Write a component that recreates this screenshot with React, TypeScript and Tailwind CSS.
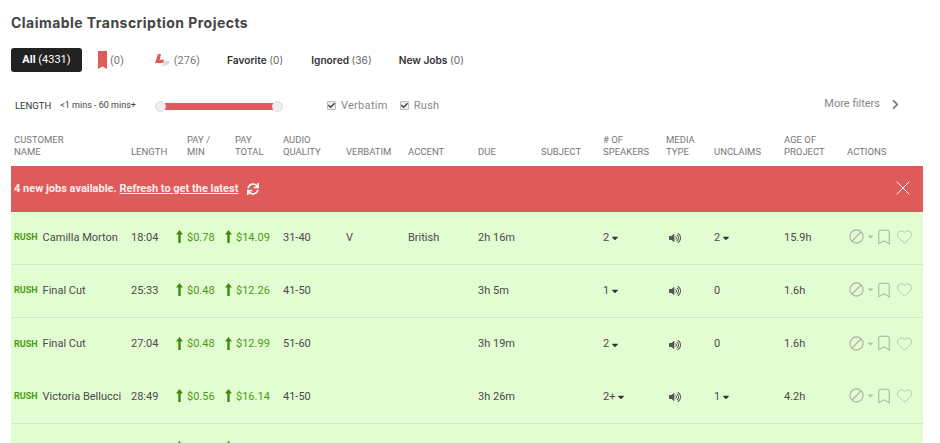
import React from "react";
import { FaCaretDown, FaCheck, FaChevronRight, FaSync, FaVolumeUp } from "react-icons/fa";
import { Bookmark, Heart, X } from "lucide-react";

const gridCols =
  "grid grid-cols-[117px_45px_49px_58px_63px_62px_70px_63px_62px_63px_48px_70px_63px_1fr] px-[3px]";

type Job = {
  name: string;
  length: string;
  perMin: string;
  total: string;
  quality: string;
  verbatim?: string;
  accent?: string;
  due: string;
  speakers: string;
  unclaims: string;
  showCaret?: boolean;
  age: string;
  border: boolean;
};

const jobs: Job[] = [
  { name: "Camilla Morton", length: "18:04", perMin: "$0.78", total: "$14.09", quality: "31-40", verbatim: "V", accent: "British", due: "2h 16m", speakers: "2", unclaims: "2", showCaret: true, age: "15.9h", border: true },
  { name: "Final Cut", length: "25:33", perMin: "$0.48", total: "$12.26", quality: "41-50", due: "3h 5m", speakers: "1", unclaims: "0", age: "1.6h", border: true },
  { name: "Final Cut", length: "27:04", perMin: "$0.48", total: "$12.99", quality: "51-60", due: "3h 19m", speakers: "2", unclaims: "0", age: "1.6h", border: false },
  { name: "Victoria Bellucci", length: "28:49", perMin: "$0.56", total: "$16.14", quality: "41-50", due: "3h 26m", speakers: "2+", unclaims: "1", showCaret: true, age: "4.2h", border: true },
];

const BanIcon = () => (
  <svg width="15" height="15" viewBox="0 0 15 15" fill="none" stroke="#a8b3a0" strokeWidth="1.1">
    <circle cx="7.5" cy="7.5" r="6.6" />
    <path d="M3 12 12 3" />
  </svg>
);

const ArrowUp = () => (
  <svg width="7" height="13" viewBox="0 0 7 13" className="mb-[3px] shrink-0" fill="#3f8a0c">
    <path d="M3.500 0 7 4.500H4.700V13H2.300V4.500H0z" />
  </svg>
);

const LogoMark = () => (
  <svg width="16" height="13" viewBox="0 0 16 13">
    <path d="M6 8c4-1 7-2 9 0-2 3-6 5-9 4l3-2z" fill="#d5dcdc" />
    <path d="M3 0h3L4.600 6 9 5.400 8 9H0z" fill="#df5a5a" />
  </svg>
);

const Check = ({ label }: { label: string }) => (
  <label className="flex items-center gap-[5px]">
    <span className="mb-[2px] flex h-[9px] w-[9px] items-center justify-center rounded-[1px] border border-[#bbb] bg-[#eee]">
      <FaCheck className="text-[7px] text-[#444]" />
    </span>
    <span className="text-[11px] tracking-[0.3px] text-[#888]">{label}</span>
  </label>
);

const Tab = ({ label, count, className }: { label: string; count: string; className?: string }) => (
  <span className={`mt-[2px] text-[10.2px] font-semibold text-[#333] ${className ?? ""}`} style={{ fontFamily: "Inter, sans-serif" }}>
    {label} <span className="font-normal text-[#666]">{count}</span>
  </span>
);

const Row = ({ job }: { job: Job }) => (
  <div className={`${gridCols} h-[53px] items-center bg-[#e3fdd2] text-[11px] text-[#4a4a4a] ${job.border ? "border-b border-[#d3e8c8]" : ""}`}>
    <div className="flex items-center gap-[5px] whitespace-nowrap">
      <span className="text-[9px] font-bold text-[#4c9a12]">RUSH</span>
      <span>{job.name}</span>
    </div>
    <div>{job.length}</div>
    <div className="flex items-center gap-[4px] text-[#4c9a12]">
      <ArrowUp />
      <span>{job.perMin}</span>
    </div>
    <div className="flex items-center gap-[4px] text-[#4c9a12]">
      <ArrowUp />
      <span>{job.total}</span>
    </div>
    <div>{job.quality}</div>
    <div>{job.verbatim}</div>
    <div>{job.accent}</div>
    <div>{job.due}</div>
    <div />
    <div className="flex items-center gap-[1px]">
      {job.speakers}
      <FaCaretDown className="text-[10px] text-[#333]" />
    </div>
    <div className="pl-[3px]">
      <FaVolumeUp className="text-[12px] text-[#555]" />
    </div>
    <div className="flex items-center gap-[1px]">
      {job.unclaims}
      {job.showCaret && <FaCaretDown className="text-[10px] text-[#333]" />}
    </div>
    <div>{job.age}</div>
    <div className="mb-[3px] flex items-center pl-[2px]">
      <BanIcon />
      <FaCaretDown className="ml-[2px] text-[9px] text-[#b0b9aa]" />
      <Bookmark size={18} strokeWidth={1} className="text-[#8f9a88]" />
      <Heart size={17} strokeWidth={1} className="ml-[3px] text-[#a8b3a0]" />
    </div>
  </div>
);

const App: React.FC = () => {
  return (
    <div className="h-[443px] w-[940px] overflow-hidden bg-white pl-[11px] pr-[17px]" style={{ fontFamily: "Roboto, sans-serif" }}>
      <h1 className="pt-[14px] text-[14px] leading-[18px] font-bold tracking-[0.46px] text-[#444]" style={{ fontFamily: "Inter, sans-serif" }}>
        Claimable Transcription Projects
      </h1>

      <div className="mt-[16px] flex h-[24px] items-center">
        <span className="flex h-[24px] w-[71px] items-center justify-center rounded-[3px] bg-[#222] pt-[1px] text-[11px] text-white">
          <b className="font-bold">All</b>&nbsp;(4331)
        </span>
        <svg width="9" height="20" viewBox="0 0 9 20" className="ml-[16px]">
          <path d="M0 1h9v18l-4.500-2.500L0 19z" fill="#df5a5a" />
        </svg>
        <span className="ml-[3px] mt-[2px] text-[11px] text-[#777]">(0)</span>
        <span className="ml-[31px]"><LogoMark /></span>
        <span className="ml-[3px] mt-[2px] text-[11px] text-[#777]">(276)</span>
        <Tab label="Favorite" count="(0)" className="ml-[27px]" />
        <Tab label="Ignored" count="(36)" className="ml-[28px]" />
        <Tab label="New Jobs" count="(0)" className="ml-[27px]" />
      </div>

      <div className="mt-[25px] flex h-[18px] items-center">
        <span className="ml-[4px] text-[9.5px] text-[#333]">LENGTH</span>
        <span className="ml-[9px] text-[9px] text-[#444]">&lt;1 mins - 60 mins+</span>
        <div className="ml-[19px] flex w-[128px] items-center">
          <span className="z-10 h-[11px] w-[11px] shrink-0 rounded-full border border-[#ddd] bg-[#eee]" />
          <span className="-mx-[1px] h-[7px] flex-1 bg-[#df5a5a]" />
          <span className="z-10 h-[11px] w-[11px] shrink-0 rounded-full border border-[#ddd] bg-[#eee]" />
        </div>
        <div className="ml-[44px] flex items-center gap-[12px]">
          <Check label="Verbatim" />
          <Check label="Rush" />
        </div>
        <div className="ml-auto mr-[22px] -mt-[4px] flex items-center gap-[10px] text-[11px] text-[#888]">
          More filters
          <FaChevronRight className="text-[11px] text-[#777]" />
        </div>
      </div>

      <div className={`${gridCols} mt-[14px] h-[37px] items-end pb-[8px] text-[9.500px] leading-[12px] text-[#777]`}>
        <div>CUSTOMER<br />NAME</div>
        <div>LENGTH</div>
        <div className="pl-[11px]">PAY /<br />MIN</div>
        <div className="pl-[10px]">PAY<br />TOTAL</div>
        <div>AUDIO<br />QUALITY</div>
        <div>VERBATIM</div>
        <div>ACCENT</div>
        <div>DUE</div>
        <div>SUBJECT</div>
        <div>
          # OF<br />SPEAKERS
        </div>
        <div>MEDIA<br />TYPE</div>
        <div>UNCLAIMS</div>
        <div>AGE OF<br />PROJECT</div>
        <div>ACTIONS</div>
      </div>

      <div className="flex h-[46px] items-center justify-between bg-[#df5a5a] pl-[3px] pr-[8px] text-[11px] font-bold text-[#fbeeee]">
        <div className="flex items-center">
          4 new jobs available.&nbsp;<span className="underline">Refresh to get the latest</span>
          <FaSync className="ml-[9px] text-[12px] text-white" />
        </div>
        <X size={24} strokeWidth={1} className="mb-[2px] text-white" />
      </div>

      {jobs.map((job) => (
        <Row key={job.name + job.length} job={job} />
      ))}

      <div className={`${gridCols} h-[30px] bg-[#e3fdd2]`}>
        <div /><div />
        <div className="pt-[17px]"><ArrowUp /></div>
        <div className="pt-[17px]"><ArrowUp /></div>
      </div>
    </div>
  );
};

export default App;
